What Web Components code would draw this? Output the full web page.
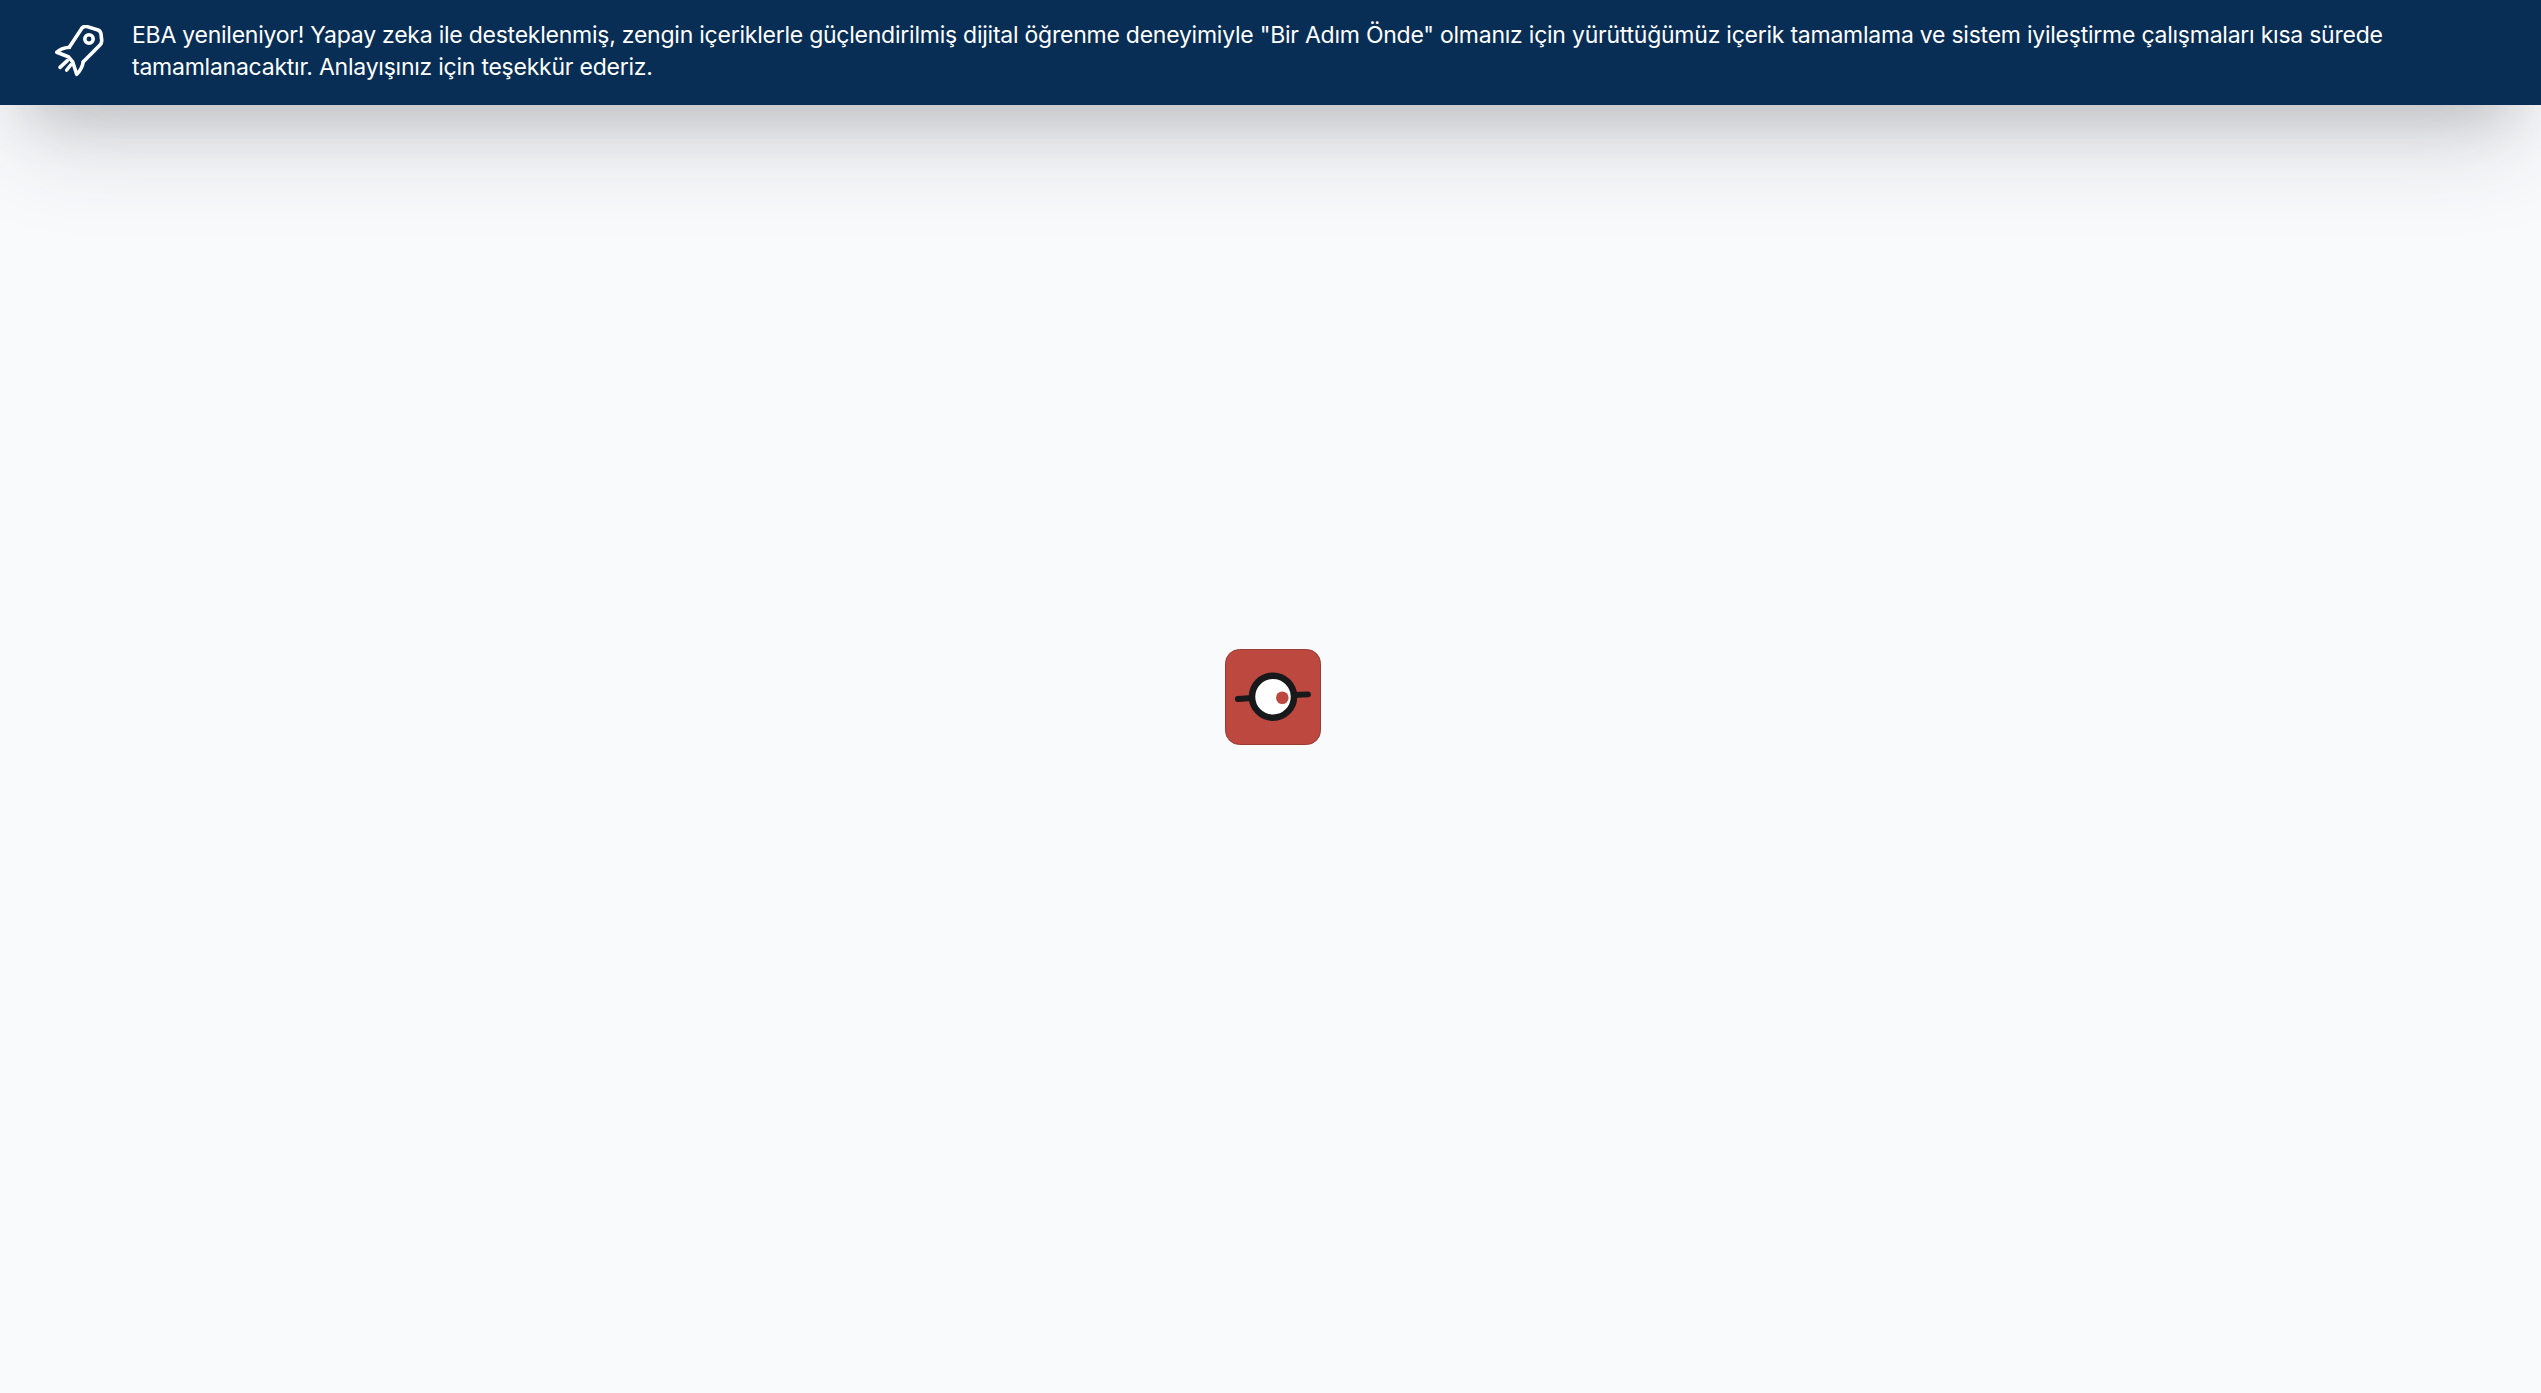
<!DOCTYPE html>
<html lang="tr">
<head>
<meta charset="utf-8">
<title>EBA</title>
<style>
  html, body { margin: 0; height: 100%; background: #f9fafc; }
  body { display: grid; height: 100vh; overflow: hidden; }
  eba-banner, eba-loader { grid-area: 1 / 1; }
</style>
</head>
<body>
<eba-banner>EBA yenileniyor! Yapay zeka ile desteklenmiş, zengin içeriklerle güçlendirilmiş dijital öğrenme deneyimiyle "Bir Adım Önde" olmanız için yürüttüğümüz içerik tamamlama ve sistem iyileştirme çalışmaları kısa sürede tamamlanacaktır. Anlayışınız için teşekkür ederiz.</eba-banner>
<eba-loader></eba-loader>
<script>
class EbaBanner extends HTMLElement {
  constructor() {
    super();
    this.root = this.attachShadow({mode: 'open'});
  }
  connectedCallback() {
    this.root.innerHTML = `
    <style>
      :host {
        display: flex;
        align-self: start;
        align-items: center;
        gap: 27px;
        box-sizing: border-box;
        height: 105px;
        padding: 0 140px 4px 55px;
        background: #082e56;
        color: #fff;
        font: 400 23px/32px "Inter", "Noto Sans", sans-serif;
        letter-spacing: -0.24px;
        box-shadow: 0 50px 100px -20px rgba(50, 50, 60, .22), 0 30px 60px -30px rgba(0, 0, 0, .26);
        z-index: 1;
      }
      svg { flex: none; width: 50px; height: 52px; margin-top: 1px; }
    </style>
    <svg viewBox="0 0 50 52" fill="none" stroke="#fff" stroke-width="3.6" stroke-linecap="round" stroke-linejoin="round">
      <path d="M14.3 22.3 L27 3 Q29 .8 32 1.6 L43 5 Q45.5 6 46 9 L46.7 15 Q47 18 45 20 L28.3 36.7"/>
      <path d="M14.3 22.3 Q6 23 1.8 27.3 L13.3 31.7 L17.7 37 L21.7 49.3 Q27 44 28.3 36.7"/>
      <circle cx="34" cy="14" r="4.2"/>
      <path d="M5 42.3 L12.3 35.7"/>
      <path d="M11.7 45 L15.7 40"/>
    </svg>
    <div><slot></slot></div>`;
  }
}

class EbaLoader extends HTMLElement {
  constructor() {
    super();
    this.root = this.attachShadow({mode: 'open'});
  }
  connectedCallback() {
    this.root.innerHTML = `
    <style>
      :host { display: block; place-self: center; margin-left: 4px; width: 96px; height: 96px; }
      svg { display: block; width: 96px; height: 96px; }
    </style>
    <svg viewBox="0 0 96 96">
      <rect x=".5" y=".5" width="95" height="95" rx="14" fill="#bc483f" stroke="#9c3b34"/>
      <path d="M12.8 50 L27 49 M68 46 L83 45.3" stroke="#17191b" stroke-width="5.8" stroke-linecap="round" fill="none"/>
      <circle cx="48" cy="47.7" r="21" fill="#fff" stroke="#17191b" stroke-width="6.5"/>
      <circle cx="57.3" cy="48.7" r="6.3" fill="#bc483f"/>
    </svg>`;
  }
}

if ('customElements' in window) {
  customElements.define('eba-banner', EbaBanner);
  customElements.define('eba-loader', EbaLoader);
}
</script>
</body>
</html>
